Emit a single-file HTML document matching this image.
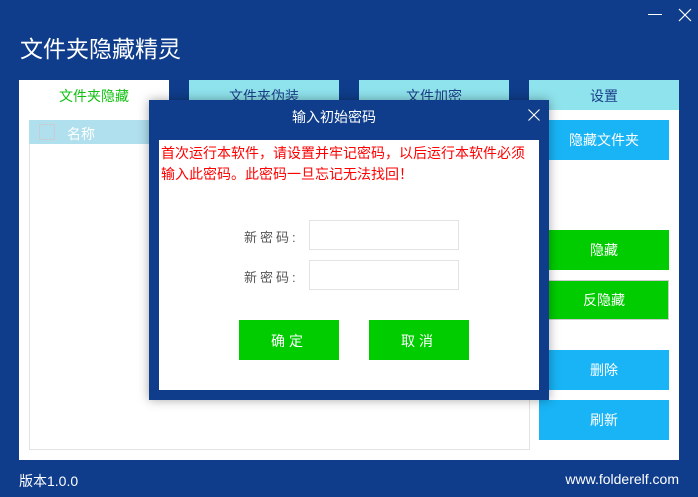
<!DOCTYPE html>
<html><head><meta charset="utf-8"><style>
body{margin:0;width:698px;height:497px;background:#0f3d8b;position:relative;overflow:hidden;font-family:"Liberation Sans","Noto Sans CJK SC",sans-serif}
.a{position:absolute}
.t{color:#fff;font-size:14px;text-align:center}
.tab{position:absolute;top:80px;width:150px;height:30px;background:#8fe3ec;color:#1b3f8a;font-size:14px;text-align:center;line-height:32px}
.btn{position:absolute;left:539px;width:130px;height:40px;line-height:40px;color:#fff;font-size:14px;text-align:center}
</style></head><body>
<div class="a" style="left:20px;top:30px;color:#fff;font-size:23px">文件夹隐藏精灵</div>
<div class="a" style="left:648px;top:14px;width:14px;height:1px;background:#fff"></div>
<svg class="a" style="left:678px;top:8px" width="14" height="14"><path d="M1 1L13 13M13 1L1 13" stroke="#fff" stroke-width="1.2"/></svg>
<div class="a" style="left:19px;top:80px;width:150px;height:30px;background:#fff;color:#10c010;font-size:14px;text-align:center;line-height:32px">文件夹隐藏</div>
<div class="tab" style="left:189px">文件夹伪装</div>
<div class="tab" style="left:359px">文件加密</div>
<div class="tab" style="left:529px">设置</div>
<div class="a" style="left:19px;top:110px;width:660px;height:350px;background:#fff"></div>
<div class="a" style="left:29px;top:120px;width:499px;height:329px;border:1px solid #e3e3e3;border-top:none"></div>
<div class="a" style="left:29px;top:120px;width:500px;height:24px;background:#b0dfed"></div>
<div class="a" style="left:39px;top:124px;width:14px;height:14px;border:1px solid #c8cdd0"></div>
<div class="a" style="left:67px;top:124px;color:#fff;font-size:14px">名称</div>
<div class="btn" style="top:120px;background:#18b4f6">隐藏文件夹</div>
<div class="btn" style="top:230px;background:#00cc00">隐藏</div>
<div class="btn" style="top:280px;background:#00cc00;box-sizing:border-box;border:1px solid #ccc;line-height:38px">反隐藏</div>
<div class="btn" style="top:350px;background:#18b4f6">删除</div>
<div class="btn" style="top:400px;background:#18b4f6">刷新</div>
<div class="a" style="left:19px;top:471px;color:#fff;font-size:14px">版本1.0.0</div>
<div class="a" style="right:19px;top:471px;color:#fff;font-size:14px">www.folderelf.com</div>
<div class="a" style="left:149px;top:100px;width:400px;height:300px;background:#0f3d8b;box-shadow:0 0 10px rgba(0,0,0,.35)"></div>
<div class="a" style="left:149px;top:107px;width:370px;color:#fff;font-size:14px;text-align:center">输入初始密码</div>
<svg class="a" style="left:528px;top:109px" width="12" height="12"><path d="M0.5 0.5L11.5 11.5M11.5 0.5L0.5 11.5" stroke="#fff" stroke-width="1.1"/></svg>
<div class="a" style="left:159px;top:140px;width:380px;height:250px;background:#fff"></div>
<div class="a" style="left:161px;top:143px;width:376px;color:#f00;font-size:14px;line-height:21px">首次运行本软件，请设置并牢记密码，以后运行本软件必须输入此密码。此密码一旦忘记无法找回！</div>
<div class="a" style="left:244px;top:227px;color:#555;font-size:13px;letter-spacing:3px">新密码:</div>
<div class="a" style="left:244px;top:267px;color:#555;font-size:13px;letter-spacing:3px">新密码:</div>
<div class="a" style="left:309px;top:220px;width:148px;height:28px;border:1px solid #e3e3e3"></div>
<div class="a" style="left:309px;top:260px;width:148px;height:28px;border:1px solid #e3e3e3"></div>
<div class="a t" style="left:239px;top:320px;width:100px;height:40px;line-height:42px;background:#00cc00;letter-spacing:4px">确定</div>
<div class="a t" style="left:369px;top:320px;width:100px;height:40px;line-height:42px;background:#00cc00;letter-spacing:4px">取消</div>
</body></html>
